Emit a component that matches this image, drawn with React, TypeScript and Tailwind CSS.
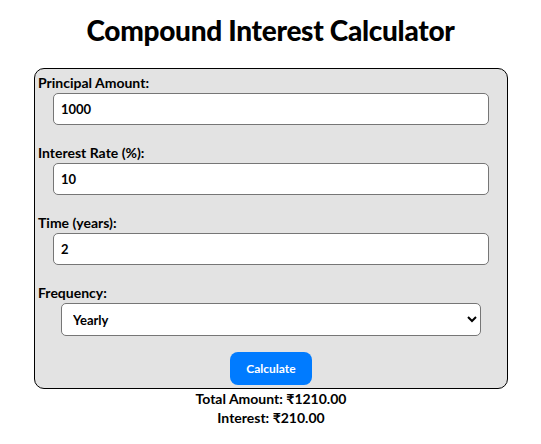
import { useState } from "react";

const font = { fontFamily: "Lato, 'Noto Sans', sans-serif" };

function Field({ label, value, onChange }: { label: string; value: string; onChange: (v: string) => void }) {
  return (
    <div className="flex flex-col">
      <label className="h-[21px] text-[14px] font-bold leading-[21px] text-black">{label}</label>
      <input
        type="number"
        value={value}
        onChange={(e) => onChange(e.target.value)}
        className="mx-auto h-[32px] w-[436px] rounded-[5px] border border-[#767676] bg-white px-[7px] text-[13px] font-bold text-black outline-none"
      />
    </div>
  );
}

export default function App() {
  const [principal, setPrincipal] = useState("1000");
  const [rate, setRate] = useState("10");
  const [time, setTime] = useState("2");
  const [freq, setFreq] = useState("1");

  return (
    <div className="flex min-h-[444px] flex-col items-center bg-white text-black" style={font}>
      <h1 className="mt-[10px] h-[40px] text-[28px] font-black leading-[40px] tracking-[-0.3px]">
        Compound Interest Calculator
      </h1>

      <div className="mt-[18px] ml-[1px] flex w-[474px] flex-col rounded-[10px] border border-black bg-[#e3e3e3] px-[3px] pt-[3px] pb-[3px]">
        <div className="flex flex-col gap-[17px]">
          <Field label="Principal Amount:" value={principal} onChange={setPrincipal} />
          <Field label="Interest Rate (%):" value={rate} onChange={setRate} />
          <Field label="Time (years):" value={time} onChange={setTime} />
          <div className="flex flex-col">
            <label className="h-[21px] text-[14px] font-bold leading-[21px]">Frequency:</label>
            <select
              value={freq}
              onChange={(e) => setFreq(e.target.value)}
              className="mx-auto h-[33px] w-[420px] rounded-[5px] border border-[#767676] bg-white px-[7px] text-[13px] font-bold outline-none"
            >
              <option value="1">Yearly</option>
              <option value="2">Half-Yearly</option>
              <option value="4">Quarterly</option>
              <option value="12">Monthly</option>
            </select>
          </div>
        </div>
        <button
          type="button"
          className="mx-auto mt-[16px] h-[33px] w-[82px] rounded-[8px] bg-[#007bff] text-[12px] font-bold text-white"
        >
          Calculate
        </button>
      </div>

      <div className="ml-[1px] flex flex-col items-center text-[14px] font-bold leading-[19px]">
        <p>Total Amount: ₹1210.00</p>
        <p>Interest: ₹210.00</p>
      </div>
    </div>
  );
}
